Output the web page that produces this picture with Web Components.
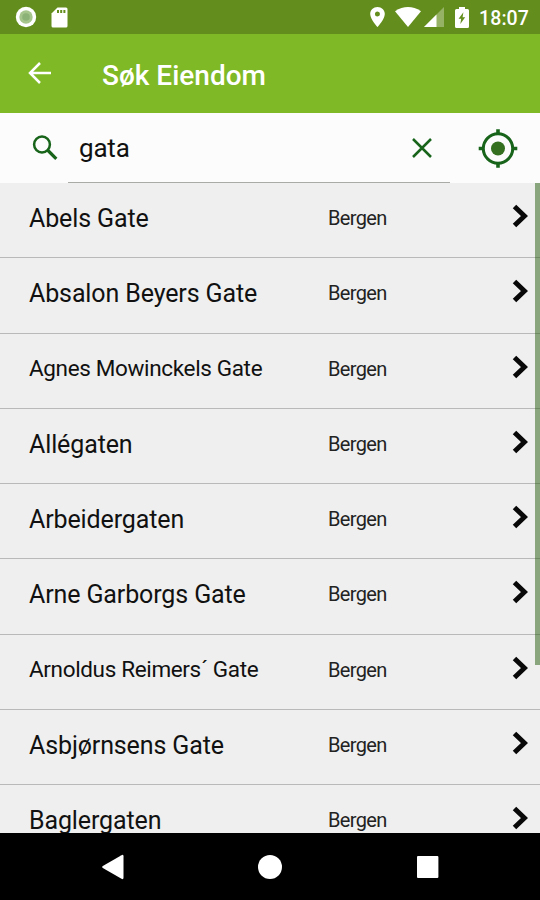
<!DOCTYPE html>
<html lang="no">
<head>
<meta charset="utf-8">
<title>Søk Eiendom</title>
<style>
body {
    margin: 0;
    background: #000;
    font-family: Roboto, sans-serif;
}
</style>
</head>
<body>
<search-app></search-app>

<script>
function createTemplate(html) {
    const template = document.createElement('template');
    template.innerHTML = html;
    return template;
}

const statusTemplate = createTemplate(`
<style>
:host {
    display: block;
    height: 34px;
    background: #638e1d;
    color: #fff;
}
.bar {
    display: flex;
    align-items: center;
    height: 34px;
    padding: 0 11px 0 15px;
}
svg { display: block; fill: #fff; }
.card { margin-left: 14px; }
.pin { margin-left: auto; }
.wifi { margin-left: 10px; }
.signal { margin-left: 3px; }
.battery { margin-left: 11px; }
.time {
    margin-left: 10px;
    padding-top: 3px;
    font-size: 19.5px;
    line-height: 22px;
    font-weight: 500;
    letter-spacing: 0.1px;
}
</style>
<div class="bar">
    <svg width="22" height="22" viewBox="0 0 22 22">
        <circle cx="11" cy="11" r="10.2"/>
        <circle cx="11" cy="11" r="6.7" fill="#a5c58c"/>
        <circle cx="11" cy="11" r="3.8" fill="#8cb278"/>
    </svg>
    <svg class="card" width="17" height="21" viewBox="0 0 17 21">
        <path d="M6.5 0.5H15Q16.5 0.5 16.5 2V19Q16.5 20.5 15 20.5H2Q0.5 20.5 0.5 19V6.5Z"/>
        <path fill="#638e1d" d="M6 3h2v3H6zM9.2 3h2v3h-2zM12.4 3h2v3h-2z"/>
    </svg>
    <svg class="pin" width="15" height="20" viewBox="0 0 15 20">
        <path d="M7.5 0C3.4 0 0.2 3.1 0.2 7C0.2 12.2 7.5 20 7.500 20S14.8 12.2 14.8 7C14.8 3.1 11.6 0 7.5 0ZM7.5 9.5A2.5 2.5 0 1 1 7.5 4.5A2.5 2.5 0 0 1 7.5 9.5Z"/>
    </svg>
    <svg class="wifi" width="26" height="20" viewBox="0 0 26 20">
        <path d="M0 4.2Q13-4.2 26 4.2L13 20Z"/>
    </svg>
    <svg class="signal" width="20" height="20" viewBox="0 0 20 20">
        <path opacity="0.32" d="M0 20L20 0V20Z"/>
        <path d="M0 20L12.5 7.5V20Z"/>
    </svg>
    <svg class="battery" width="14" height="21" viewBox="0 0 14 21">
        <path d="M4 0h6v2h2.5Q14 2 14 3.5v16Q14 21 12.5 21h-11Q0 21 0 19.5v-16Q0 2 1.5 2H4Z"/>
        <path fill="#638e1d" d="M8.4 5.2L3.6 11.7H6.2L5.3 17L10.2 10.2H7.6Z"/>
    </svg>
    <span class="time"><slot></slot></span>
</div>
`);

class StatusBar extends HTMLElement {
    constructor() {
        super();
        this.attachShadow({mode: 'open'});
        this.shadowRoot.appendChild(statusTemplate.content.cloneNode(true));
    }
}
customElements.define('status-bar', StatusBar);

const headerTemplate = createTemplate(`
<style>
:host {
    display: flex;
    align-items: center;
    box-sizing: border-box;
    height: 79px;
    padding: 2px 0 0 28px;
    background: #7fb925;
    color: #fff;
}
svg {
    display: block;
    margin-bottom: 4px;
    fill: none;
    stroke: #fff;
    stroke-width: 2.5;
}
h1 {
    margin: 2px 0 0 51px;
    font-size: 28px;
    line-height: 32px;
    font-weight: 500;
}
</style>
<svg width="23" height="22" viewBox="0 0 23 22"><path d="M23 11H2M12 1L2 11L12 21"/></svg>
<h1><slot></slot></h1>
`);

class AppHeader extends HTMLElement {
    constructor() {
        super();
        this.attachShadow({mode: 'open'});
        this.shadowRoot.appendChild(headerTemplate.content.cloneNode(true));
    }
}
customElements.define('app-header', AppHeader);

const searchTemplate = createTemplate(`
<style>
:host {
    display: flex;
    height: 70px;
    background: #fcfcfc;
    color: #111;
}
svg {
    display: block;
    fill: none;
    stroke: #17641a;
}
.search { margin: 22px 10px 0 32px; }
.field {
    display: flex;
    box-sizing: border-box;
    width: 382px;
    height: 70px;
    padding: 19px 18px 0 11px;
    border-bottom: 1.5px solid #a9aba7;
}
.text {
    flex: 1;
    font-size: 26px;
    line-height: 32px;
    letter-spacing: -0.2px;
}
.clear { margin-top: 6px; }
.locate { margin: 16px 0 0 28px; }
</style>
<svg class="search" width="26" height="26" viewBox="0 0 26 26">
    <circle cx="10" cy="9.5" r="7.9" stroke-width="2.5"/>
    <path d="M15.5 15L24.3 23.8" stroke-width="3.2"/>
</svg>
<div class="field">
    <span class="text"><slot></slot></span>
    <svg class="clear" width="20" height="20" viewBox="0 0 20 20"><path stroke-width="2.5" d="M1 1L19 19M19 1L1 19"/></svg>
</div>
<svg class="locate" width="40" height="40" viewBox="0 0 40 40">
    <circle cx="20" cy="19.5" r="14.7" stroke-width="3"/>
    <circle cx="20" cy="19.5" r="7" fill="#347020" stroke="none"/>
    <path stroke-width="3.6" d="M20 0.2V5.5M20 33.5V38.8M0.7 19.5H6M34 19.5H39.3"/>
</svg>
`);

class SearchField extends HTMLElement {
    constructor() {
        super();
        this.attachShadow({mode: 'open'});
        this.shadowRoot.appendChild(searchTemplate.content.cloneNode(true));
    }
}
customElements.define('search-field', SearchField);

const rowTemplate = createTemplate(`
<style>
:host {
    display: grid;
    grid-template-columns: 299px 1fr 16px;
    box-sizing: border-box;
    height: 75.25px;
    padding: 19px 12px 0 29px;
    border-bottom: 1.5px solid #b9b9b9;
    color: #111;
    line-height: 32px;
}
.name {
    padding-top: 1px;
    font-size: 25px;
    letter-spacing: -0.12px;
    white-space: nowrap;
}
:host([compact]) .name {
    padding-top: 0;
    margin-top: -1px;
    font-size: 22.5px;
    letter-spacing: -0.35px;
}
.place {
    font-size: 20px;
    letter-spacing: -0.65px;
    color: #222;
}
svg {
    display: block;
    margin-top: 2px;
    fill: none;
    stroke: #080808;
    stroke-width: 5;
}
</style>
<span class="name"><slot></slot></span>
<span class="place"><slot name="place"></slot></span>
<svg width="16" height="24" viewBox="0 0 16 24"><path d="M2.5 2.5L12.5 12L2.5 21.5"/></svg>
`);

class ResultRow extends HTMLElement {
    constructor() {
        super();
        this.attachShadow({mode: 'open'});
        this.shadowRoot.appendChild(rowTemplate.content.cloneNode(true));
    }
}
customElements.define('result-row', ResultRow);

const listTemplate = createTemplate(`
<style>
:host {
    display: block;
    position: relative;
    height: 650px;
    overflow: hidden;
    background: #efefef;
}
.thumb {
    position: absolute;
    top: 0;
    right: 0;
    width: 5px;
    height: 482px;
    background: rgba(23, 82, 0, 0.47);
}
</style>
<slot></slot>
<div class="thumb"></div>
`);

class ResultList extends HTMLElement {
    constructor() {
        super();
        this.attachShadow({mode: 'open'});
        this.shadowRoot.appendChild(listTemplate.content.cloneNode(true));
    }
}
customElements.define('result-list', ResultList);

const navTemplate = createTemplate(`
<style>
:host {
    display: flex;
    justify-content: space-between;
    align-items: center;
    box-sizing: border-box;
    height: 67px;
    padding: 0 101px;
    background: #000;
}
svg { display: block; fill: #fff; }
</style>
<svg width="24" height="26" viewBox="0 0 24 26"><path d="M1.8 12L20.5 1.2Q22.5 0.2 22.5 2.2V23.8Q22.5 25.8 20.5 24.8L1.8 14Q0.2 13 1.8 12Z"/></svg>
<svg width="24" height="24" viewBox="0 0 24 24"><circle cx="12" cy="12" r="12"/></svg>
<svg width="24" height="24" viewBox="0 0 24 24"><rect x="2" y="1" width="21.4" height="22" rx="1"/></svg>
`);

class NavigationBar extends HTMLElement {
    constructor() {
        super();
        this.attachShadow({mode: 'open'});
        this.shadowRoot.appendChild(navTemplate.content.cloneNode(true));
    }
}
customElements.define('navigation-bar', NavigationBar);

const streets = [
    { name: 'Abels Gate' },
    { name: 'Absalon Beyers Gate' },
    { name: 'Agnes Mowinckels Gate', compact: true },
    { name: 'Allégaten' },
    { name: 'Arbeidergaten' },
    { name: 'Arne Garborgs Gate' },
    { name: 'Arnoldus Reimers´ Gate', compact: true },
    { name: 'Asbjørnsens Gate' },
    { name: 'Baglergaten' }
];

class SearchApp extends HTMLElement {
    constructor() {
        super();
        this.attachShadow({mode: 'open'});
        this.shadowRoot.innerHTML = `
<style>
:host {
    display: block;
    width: 540px;
    height: 900px;
    overflow: hidden;
}
</style>
<status-bar>18:07</status-bar>
<app-header>Søk Eiendom</app-header>
<search-field>gata</search-field>
<result-list>${streets.map(street => `
    <result-row${street.compact ? ' compact' : ''}>${street.name}<span slot="place">Bergen</span></result-row>`).join('')}
</result-list>
<navigation-bar></navigation-bar>
`;
    }
}
customElements.define('search-app', SearchApp);
</script>
</body>
</html>
